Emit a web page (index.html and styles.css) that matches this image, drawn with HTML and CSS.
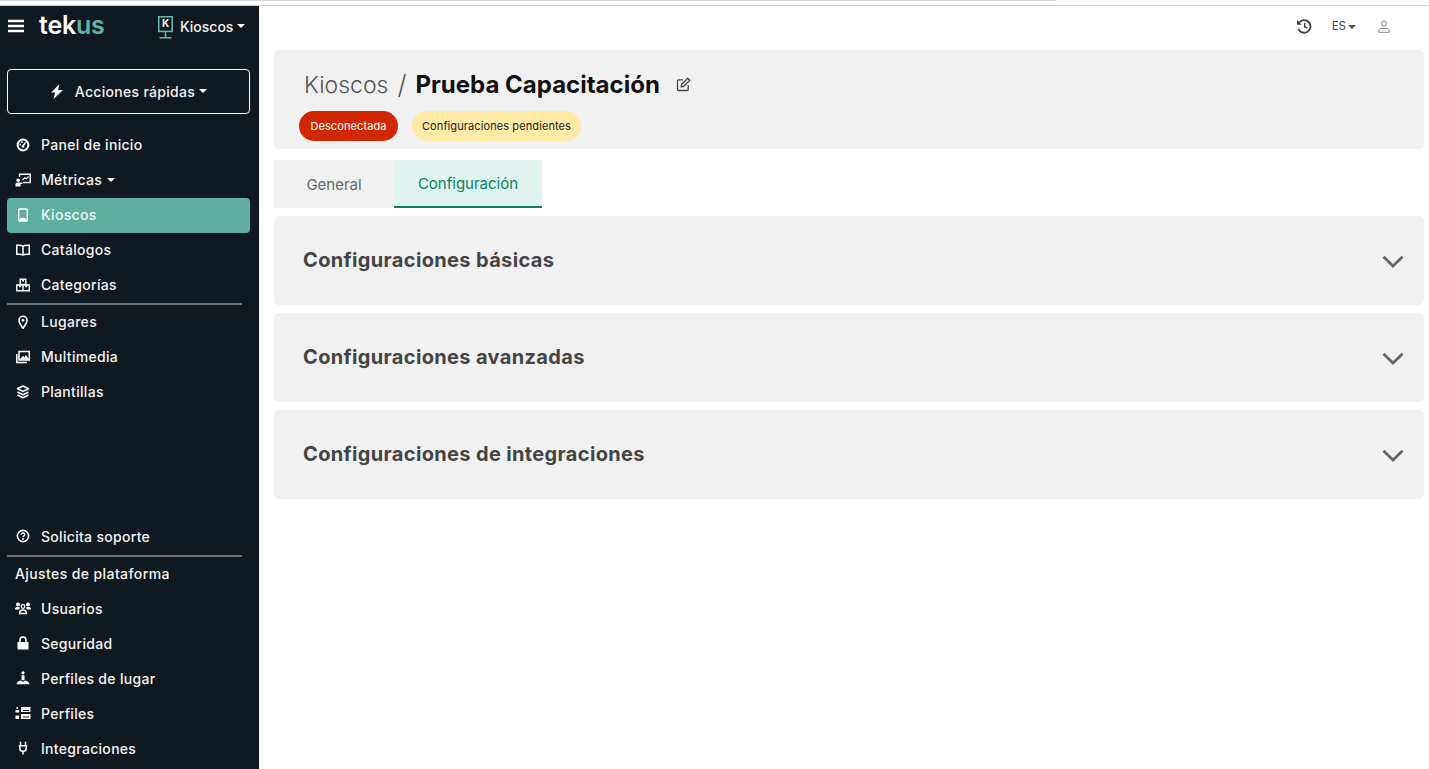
FILE: index.html
```html
<!DOCTYPE html>
<html lang="es">
<head>
    <meta charset="UTF-8">
    <title>Prueba Capacitación</title>
    <link rel="stylesheet" href="styles.css">
</head>
<body>
    <div class="top-strip"><div class="top-strip-line"></div></div>
    <div class="layout">
        <aside class="sidebar">
            <div class="brand-row">
                <svg class="burger" width="16" height="14" viewBox="0 0 16 14"><path d="M0 2h16M0 7h16M0 12h16" stroke="#fff" stroke-width="2.400" stroke-linecap="round"/></svg>
                <span class="logo">tek<span class="logo-us">us</span></span>
                <svg class="kiosk-logo" width="15" height="23" viewBox="0 0 15 23" fill="none"><rect x=".8" y=".8" width="13.400" height="14.600" stroke="#5eb5a1" stroke-width="1.600"/><path d="M7.500 15.500v6M1.500 21.800h12" stroke="#5eb5a1" stroke-width="1.600"/></svg>
                <span class="kiosk-k">K</span>
                <span class="app-name">Kioscos</span><span class="caret"></span>
            </div>
            <button class="quick-btn">
                <svg width="14" height="15" viewBox="0 0 14 15"><path d="M9.500 0 1 8.500h4.200L3.600 15 13 6H8z" fill="#fff"/></svg>
                <span>Acciones rápidas</span><span class="caret"></span>
            </button>
            <nav class="menu menu-top">
                <a class="item"><svg class="ico" viewBox="0 0 14 14" fill="none"><circle cx="7" cy="7" r="5.400" stroke="#fff" stroke-width="2"/><path d="M7 8 9.500 4.500" stroke="#fff" stroke-width="1.500"/><circle cx="4.200" cy="6.500" r=".9" fill="#fff"/><circle cx="6" cy="4" r=".9" fill="#fff"/><circle cx="7" cy="8.400" r="1.300" fill="#fff"/></svg>Panel de inicio</a>
                <a class="item"><svg class="ico" viewBox="0 0 16 14" fill="none"><path d="M4.500 4V1.200h10.700v8.300H8" stroke="#fff" stroke-width="1.400"/><path d="M7.500 7l2.300-2.200 1.500 1L13.500 3.500" stroke="#fff" stroke-width="1.200"/><circle cx="3.200" cy="7.300" r="1.800" fill="#fff"/><path d="M.5 13.500v-2.300c0-1 1-1.700 2.700-1.700h4.300v1.400H5.500v2.600z" fill="#fff"/></svg>Métricas<span class="caret"></span></a>
                <a class="item active"><svg class="ico" viewBox="0 0 14 14" fill="none"><rect x="2.700" y="1" width="8.600" height="12" rx="1" stroke="#fff" stroke-width="1.500"/><path d="M4.500 10h5l1 3h-7z" fill="#fff"/></svg>Kioscos</a>
                <a class="item"><svg class="ico" viewBox="0 0 14 14" fill="none"><path d="M7 3.200C6 2.300 4 2 .8 2.200v9C4 11 6 11.300 7 12c1-.7 3-1 6.200-.8v-9C10 2 8 2.300 7 3.200zM7 3.200V12" stroke="#fff" stroke-width="1.500"/></svg>Catálogos</a>
                <a class="item"><svg class="ico" viewBox="0 0 14 14" fill="none"><path d="M4.200 1.200h5.600v5.300H4.200zM.8 7h6.200v5.800H.8zM7 7h6.200v5.800H7z" stroke="#fff" stroke-width="1.400"/><path d="M6 1.200h2v2.300H6zM3 7h1.800v2.300H3zM9.200 7H11v2.300H9.200z" fill="#fff"/></svg>Categorías</a>
                <div class="rule"></div>
                <a class="item"><svg class="ico" viewBox="0 0 14 14" fill="none"><path d="M7 13.200C4.500 10 3 8 3 5.300a4 4 0 0 1 8 0C11 8 9.500 10 7 13.200z" stroke="#fff" stroke-width="1.600"/><circle cx="7" cy="5.300" r="1.400" fill="#fff"/></svg>Lugares</a>
                <a class="item"><svg class="ico" viewBox="0 0 14 14" fill="none"><path d="M3 1.500h10.300v8.500H3z" stroke="#fff" stroke-width="1.500"/><path d="M.8 4v8.500h10" stroke="#fff" stroke-width="1.500"/><path d="M3.500 9.800l3.500-4 1.500 1.500L10 5l3.300 4.800z" fill="#fff"/></svg>Multimedia</a>
                <a class="item"><svg class="ico" viewBox="0 0 14 14" fill="none"><path d="M7 1 1.500 3.700 7 6.400l5.500-2.700zM1.500 7 7 9.700 12.500 7M1.500 10 7 12.700l5.500-2.700" stroke="#fff" stroke-width="1.600" stroke-linejoin="round"/></svg>Plantillas</a>
            </nav>
            <nav class="menu menu-bottom">
                <a class="item"><svg class="ico" viewBox="0 0 14 14" fill="none"><circle cx="7" cy="7" r="5.600" stroke="#fff" stroke-width="1.600"/><path d="M5.200 5.600C5.200 3.500 8.800 3.500 8.800 5.600 8.800 7 7 6.800 7 8.300" stroke="#fff" stroke-width="1.400"/><circle cx="7" cy="10" r=".9" fill="#fff"/></svg>Solicita soporte</a>
                <div class="rule rule-low"></div>
                <div class="section-title">Ajustes de plataforma</div>
                <a class="item"><svg class="ico" viewBox="0 0 16 14"><circle cx="3" cy="3.500" r="2" fill="#fff"/><circle cx="13" cy="3.500" r="2" fill="#fff"/><path d="M0 8.500C0 6.500 1 6 3 6c1 0 1.500.2 2 .7L4 8.500zM16 8.500c0-2-1-2.500-3-2.500-1 0-1.500.2-2 .7l1 1.800z" fill="#fff"/><circle cx="8" cy="5.500" r="1.800" fill="none" stroke="#fff" stroke-width="1.200"/><path d="M4.500 12.500c0-3 1.500-3.500 3.500-3.500s3.500.5 3.500 3.500z" fill="none" stroke="#fff" stroke-width="1.400"/></svg>Usuarios</a>
                <a class="item"><svg class="ico" viewBox="0 0 14 14"><path d="M1.500 6h11v6.500a1 1 0 0 1-1 1h-9a1 1 0 0 1-1-1z" fill="#fff"/><path d="M4 6.500V4a3 3 0 0 1 6 0v2.500" fill="none" stroke="#fff" stroke-width="1.600"/></svg>Seguridad</a>
                <a class="item"><svg class="ico" viewBox="0 0 14 14"><circle cx="7" cy="1.800" r="1.600" fill="#fff"/><path d="M5.500 4.200h3v5h-3zM.5 13.300c0-1.800 2.200-3.300 4.300-3.700L7 11l2.200-1.400c2.100.4 4.300 1.900 4.300 3.700z" fill="#fff"/></svg>Perfiles de lugar</a>
                <a class="item"><svg class="ico" viewBox="0 0 16 14"><path d="M6 1h9.500v5H6zM6 8h9.500v5H6z" fill="#fff"/><path d="M8 4h6v1H8zM8 10.500h6v1H8z" fill="#10191f"/><path d="M.5 4h3.600v2.500H.500zM.5 9.500h3.600V13H.500zM1.500 1h1.600v2H1.500z" fill="#fff"/></svg>Perfiles</a>
                <a class="item"><svg class="ico" viewBox="0 0 14 14" fill="none"><path d="M4.500 .8v3.700M9.500 .8v3.700" stroke="#fff" stroke-width="1.500"/><path d="M2.800 4.800h8.400M3.800 4.800v2.400c0 2 1.500 3.100 3.200 3.100s3.200-1.100 3.200-3.100V4.800M7 10.300V13.500" stroke="#fff" stroke-width="1.500"/></svg>Integraciones</a>
            </nav>
        </aside>
        <main class="main">
            <div class="topbar">
                <svg width="16" height="15" viewBox="0 0 16 15" fill="none"><path d="M3.200 3.500A6.300 6.300 0 1 1 2.300 9.800" stroke="#3b3f44" stroke-width="1.800"/><path d="M1 1v4.700h4.700z" fill="#3b3f44"/><path d="M8.700 4v3.700l2.600 1.400" stroke="#3b3f44" stroke-width="1.500"/></svg>
                <span class="lang">ES</span><span class="lang-caret"></span>
                <svg class="user" width="12" height="13" viewBox="0 0 12 13" fill="none"><circle cx="6" cy="3.500" r="2.600" stroke="#777" stroke-width=".9"/><path d="M.8 12.300v-1.300c0-1.800 1.400-2.600 3-2.600h4.400c1.600 0 3 .8 3 2.600v1.300z" stroke="#777" stroke-width=".9"/></svg>
            </div>
            <section class="header-card">
                <div class="title-row">
                    <span class="crumb">Kioscos</span>
                    <span class="slash">/</span>
                    <h1>Prueba Capacitación</h1>
                    <svg width="15" height="15" viewBox="0 0 15 15" fill="none"><path d="M7 2.800H2.500a1 1 0 0 0-1 1v8.700a1 1 0 0 0 1 1h8.700a1 1 0 0 0 1-1V8" stroke="#444" stroke-width="1.300"/><path d="M5.500 7.500 11.800 1.200l2 2L7.500 9.500l-2.300.3z" stroke="#444" stroke-width="1.300" stroke-linejoin="round"/></svg>
                </div>
                <div class="badges">
                    <span class="badge badge-red">Desconectada</span>
                    <span class="badge badge-yellow">Configuraciones pendientes</span>
                </div>
            </section>
            <div class="tabs">
                <div class="tab">General</div>
                <div class="tab tab-active">Configuración</div>
            </div>
            <div class="accordion">
                <h2>Configuraciones básicas</h2>
                <svg width="22" height="13" viewBox="0 0 22 13" fill="none"><path d="M1.500 1.800 11 11 20.500 1.800" stroke="#666" stroke-width="2.800"/></svg>
            </div>
            <div class="accordion">
                <h2>Configuraciones avanzadas</h2>
                <svg width="22" height="13" viewBox="0 0 22 13" fill="none"><path d="M1.500 1.800 11 11 20.500 1.800" stroke="#666" stroke-width="2.800"/></svg>
            </div>
            <div class="accordion">
                <h2>Configuraciones de integraciones</h2>
                <svg width="22" height="13" viewBox="0 0 22 13" fill="none"><path d="M1.500 1.800 11 11 20.500 1.800" stroke="#666" stroke-width="2.800"/></svg>
            </div>
        </main>
    </div>
</body>
</html>
```
FILE: styles.css
```css
* { box-sizing: border-box; }
html, body { height: 100%; }
body {
    margin: 0;
    background: #fff;
    font-family: 'Inter', 'Liberation Sans', sans-serif;
    overflow: hidden;
    display: flex;
    flex-direction: column;
}
.top-strip {
    height: 6px;
    flex: none;
    border-bottom: 1px solid #cfcfcf;
}
.top-strip-line {
    width: 1056px;
    height: 1px;
    background: #d6d6d6;
}
.layout {
    flex: 1;
    display: flex;
    min-height: 0;
}
.sidebar {
    width: 259px;
    flex: none;
    background: #10191f;
    color: #f4f4f4;
    display: flex;
    flex-direction: column;
    padding: 0 9px 0 7px;
}
.brand-row {
    height: 40px;
    display: flex;
    align-items: center;
    position: relative;
    flex: none;
}
.burger { margin-left: 1px; }
.logo {
    font-size: 25px;
    font-weight: 600;
    color: #fff;
    margin-left: 15px;
    letter-spacing: -.2px;
    width: 80px;
    line-height: 1;
    margin-top: -2px;
}
.logo-us { color: #5eb5a1; }
.kiosk-logo { margin-left: 39px; margin-top: 2px; }
.kiosk-k {
    position: absolute;
    left: 155px;
    top: 11px;
    font-size: 10px;
    font-weight: 700;
    color: #fff;
}
.app-name { font-size: 14px; font-weight: 500; margin-left: 7px; }
.caret {
    display: inline-block;
    width: 0;
    height: 0;
    margin-left: 4px;
    border-left: 4.500px solid transparent;
    border-right: 4.500px solid transparent;
    border-top: 4.500px solid #fff;
}
.quick-btn {
    margin-top: 23px;
    height: 45px;
    flex: none;
    background: transparent;
    border: 1px solid #fff;
    border-radius: 4px;
    color: #f4f4f4;
    font: inherit;
    font-size: 14px;
    font-weight: 500;
    letter-spacing: .3px;
    padding-bottom: 2px;
    display: flex;
    align-items: center;
    justify-content: center;
}
.quick-btn svg { margin-right: 11px; }
.menu { display: flex; flex-direction: column; }
.menu-top { margin-top: 14px; }
.menu-bottom { margin-top: auto; padding-bottom: 3px; }
.item {
    height: 35px;
    display: flex;
    align-items: center;
    padding: 0 0 1px 8px;
    font-size: 14px;
    font-weight: 500;
    border-radius: 4px;
    letter-spacing: .3px;
}
.menu-top .item { padding-bottom: 2px; }
.item .caret { margin-left: 5px; margin-top: 1px; }
.item.active { background: #5eb09e; }
.ico {
    width: 16px;
    height: 14px;
    margin-right: 10px;
    flex: none;
}
.rule {
    height: 2px;
    background: #6b7074;
    margin-right: 8px;
}
.rule-low { margin-top: 1px; }
.section-title {
    height: 34px;
    display: flex;
    align-items: center;
    padding: 0 0 2px 8px;
    font-size: 14px;
    font-weight: 500;
    letter-spacing: .4px;
}
.main {
    flex: 1;
    min-width: 0;
    padding: 0 5px 0 15px;
}
.topbar {
    height: 44px;
    display: flex;
    align-items: center;
    justify-content: flex-end;
    padding-right: 34px;
    padding-bottom: 4px;
}
.lang { font-size: 11.500px; color: #3b4a5a; margin-left: 20px; }
.lang-caret {
    width: 0;
    height: 0;
    margin-left: 2px;
    margin-top: 2px;
    border-left: 4px solid transparent;
    border-right: 4px solid transparent;
    border-top: 4px solid #555;
}
.user { margin-left: 22px; }
.header-card {
    background: #f1f1f1;
    border-radius: 5px;
    height: 99px;
    padding: 17px 0 0 25px;
}
.title-row {
    display: flex;
    align-items: center;
    height: 35px;
    padding-left: 5px;
}
.crumb { font-size: 23px; font-weight: 300; color: #555; }
.slash { font-size: 26px; font-weight: 300; color: #555; margin: 0 9px; }
h1 {
    margin: 0 16px 0 0;
    font-size: 24px;
    font-weight: 700;
    color: #111;
}
.badges {
    display: flex;
    gap: 14px;
    margin-top: 9px;
}
.badge {
    height: 30px;
    border-radius: 15px;
    font-size: 11px;
    letter-spacing: .1px;
    display: flex;
    align-items: center;
    justify-content: center;
}
.badge-red { width: 99px; background: #d02700; color: #fff; }
.badge-yellow { width: 169px; background: #ffeaa6; color: #222; }
.tabs {
    display: flex;
    margin-top: 11px;
    height: 48px;
}
.tab {
    background: #f1f1f1;
    width: 120px;
    display: flex;
    align-items: center;
    justify-content: center;
    font-size: 15px;
    color: #666;
}
.tab-active {
    width: 148px;
    background: #e0f4ef;
    color: #0b7f62;
    border-bottom: 2px solid #0b7f62;
}
.accordion {
    height: 89px;
    margin-top: 8px;
    background: #f1f1f1;
    border-radius: 5px;
    display: flex;
    align-items: center;
    justify-content: space-between;
    padding: 0 20px 0 29px;
}
.accordion svg { margin-top: 2px; }
h2 {
    margin: 0 0 2px;
    font-size: 20px;
    font-weight: 700;
    letter-spacing: .35px;
    color: #444;
}
```
